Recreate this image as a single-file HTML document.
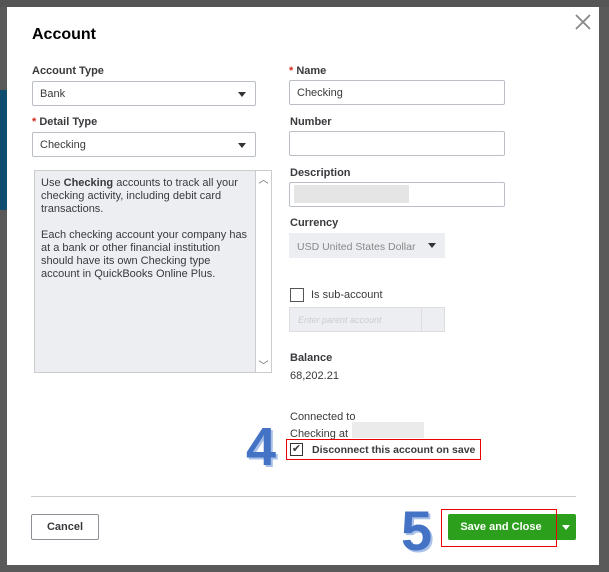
<!DOCTYPE html>
<html><head><style>
body{margin:0;width:609px;height:572px;background:#5a5a5a;position:relative;overflow:hidden;font-family:"Liberation Sans",sans-serif;font-size:11px;color:#393a3d}
.a{position:absolute}
.m{left:7px;top:7px;width:592px;height:558px;background:#fff}
.lbl{font-weight:bold;font-size:11px;color:#393a3d}
.inp{border:1px solid #babec5;border-radius:2px;background:#fff;box-sizing:border-box;height:25px;padding:6px 7px;font-size:11px}
.star{color:#d52b1e}
.tri{position:absolute;right:9px;top:10px;border-left:4px solid transparent;border-right:4px solid transparent;border-top:5px solid #333}
.gray{background:#e5e5e5}
</style></head><body>
<div class="a" style="left:0;top:0;width:609px;height:7px;background:#555"></div>
<div class="a" style="left:0;top:90px;width:7px;height:120px;background:#0e4d70"></div>
<div class="a m"></div>
<div class="a" style="left:32px;top:26px;font-size:16px;font-weight:bold;color:#000">Account</div>
<svg class="a" style="left:575px;top:14px" width="16" height="16"><path d="M1 1L15 15M15 1L1 15" stroke="#888" stroke-width="1.8"/></svg>

<div class="a lbl" style="left:32px;top:65px">Account Type</div>
<div class="a inp" style="left:32px;top:81px;width:224px">Bank<span class="tri"></span></div>
<div class="a lbl" style="left:32px;top:116px"><span class="star">*</span> Detail Type</div>
<div class="a inp" style="left:32px;top:132px;width:224px">Checking<span class="tri"></span></div>
<div class="a" style="left:34px;top:170px;width:238px;height:203px;background:#eceef1;border:1px solid #ccc;box-sizing:border-box"></div>
<div class="a" style="left:255px;top:170px;width:17px;height:203px;background:#fff;border:1px solid #ccc;box-sizing:border-box;font-size:10px;text-align:center;color:#666"><div>︿</div><div style="position:absolute;bottom:0;width:100%">﹀</div></div>
<div class="a" style="left:41px;top:177px;width:210px;line-height:13px;font-size:11px">Use <b>Checking</b> accounts to track all your checking activity, including debit card transactions.<br><br>Each checking account your company has at a bank or other financial institution should have its own Checking type account in QuickBooks Online Plus.</div>

<div class="a lbl" style="left:289px;top:65px"><span class="star">*</span> Name</div>
<div class="a inp" style="left:289px;top:80px;width:216px">Checking</div>
<div class="a lbl" style="left:290px;top:116px">Number</div>
<div class="a inp" style="left:289px;top:131px;width:216px"></div>
<div class="a lbl" style="left:290px;top:167px">Description</div>
<div class="a inp" style="left:289px;top:182px;width:216px"></div>
<div class="a gray" style="left:294px;top:185px;width:115px;height:18px"></div>
<div class="a lbl" style="left:290px;top:217px">Currency</div>
<div class="a" style="left:289px;top:233px;width:156px;height:25px;background:#eceef1;color:#888;padding:8px 8px;box-sizing:border-box;font-size:10.5px">USD United States Dollar<span class="tri" style="top:10px"></span></div>
<div class="a" style="left:290px;top:288px;width:12px;height:12px;border:1px solid #555"></div>
<div class="a" style="left:311px;top:289px">Is sub-account</div>
<div class="a" style="left:289px;top:307px;width:156px;height:25px;background:#eceef1;border:1px solid #ddd;box-sizing:border-box;color:#ccc;font-style:italic;font-size:9px;padding:7px 8px">Enter parent account<span class="a" style="left:131px;top:0;height:23px;border-left:1px solid #ddd"></span></div>
<div class="a lbl" style="left:290px;top:352px">Balance</div>
<div class="a" style="left:290px;top:370px">68,202.21</div>
<div class="a" style="left:290px;top:411px">Connected to</div>
<div class="a" style="left:290px;top:428px">Checking at</div>
<div class="a gray" style="left:352px;top:422px;width:72px;height:16px;background:#ebebeb"></div>
<div class="a" style="left:286px;top:439px;width:195px;height:21px;border:1px solid #e00;box-sizing:border-box"></div>
<div class="a" style="left:290px;top:443px;width:11px;height:11px;border:1px solid #333;font-size:11px;line-height:11px;text-align:center">✔</div>
<div class="a" style="left:312px;top:444px;font-weight:bold;font-size:10.5px">Disconnect this account on save</div>
<div class="a" style="left:246px;top:420px;font-size:54px;font-weight:bold;color:#4472c4;text-shadow:2px 2px 0 #a9c0e8;line-height:54px">4</div>

<div class="a" style="left:31px;top:496px;width:545px;height:1px;background:#ccc"></div>
<div class="a" style="left:31px;top:514px;width:68px;height:26px;border:1px solid #8d9096;border-radius:2px;box-sizing:border-box;text-align:center;line-height:24px;font-weight:bold">Cancel</div>
<div class="a" style="left:401px;top:503px;font-size:56px;font-weight:bold;color:#4472c4;text-shadow:2px 2px 0 #a9c0e8;line-height:56px">5</div>
<div class="a" style="left:448px;top:514px;width:128px;height:26px;background:#2ca01c;border-radius:2px"></div>
<div class="a" style="left:448px;top:514px;width:106px;height:26px;color:#fff;font-weight:bold;text-align:center;line-height:26px">Save and Close</div>
<div class="a" style="left:556px;top:514px;width:1px;height:26px;background:#fff;opacity:.5"></div>
<div class="a" style="left:562px;top:525px;border-left:4px solid transparent;border-right:4px solid transparent;border-top:5px solid #fff"></div>
<div class="a" style="left:441px;top:509px;width:116px;height:38px;border:1px solid #e00;box-sizing:border-box"></div>
</body></html>
